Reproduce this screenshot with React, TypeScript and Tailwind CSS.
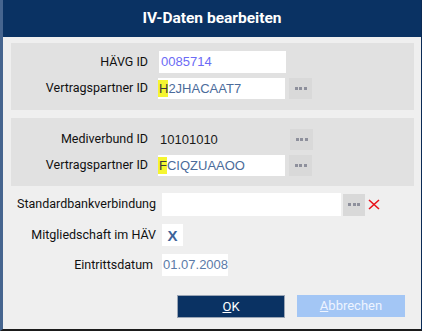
import React from 'react';

const label = "text-[12.5px] text-[#111111] text-right whitespace-nowrap";
const valueFont = "font-['Liberation_Sans',Arial,sans-serif] text-[13px]";

function Dots({ className = 'w-[23px] h-[21px]' }: { className?: string }) {
    return (
        <div className={`${className} bg-[#d9d9d9] flex items-center justify-center gap-[1.5px]`}>
            <span className="w-[3px] h-[3px] bg-[#8e909c]"></span>
            <span className="w-[3px] h-[3px] bg-[#8e909c]"></span>
            <span className="w-[3px] h-[3px] bg-[#8e909c]"></span>
        </div>
    );
}

function IdValue({ first, rest }: { first: string; rest: string }) {
    return (
        <div className={`w-[127px] h-[21px] bg-white flex items-center text-[#4b6b9a] ${valueFont}`}>
            <span className="bg-[#f5f530] text-[#3a3a3a] leading-[17px] pl-[1px]">{first}</span>
            <span>{rest}</span>
        </div>
    );
}

export default function App() {
    return (
        <div className="w-[422px] h-[331px] bg-[#efefef] border-l-[3px] border-l-[#46658f] border-r border-r-[#0a2a55] border-b-2 border-b-[#1b1b1b] flex flex-col font-['Roboto','Liberation_Sans',sans-serif] overflow-hidden">
            {/* Header */}
            <div className="h-[37px] bg-[#0a3263] flex items-center justify-center shrink-0">
                <h1 className="text-white font-bold text-[15.5px]">IV-Daten bearbeiten</h1>
            </div>

            <div className="pl-[8px] pr-[7px] pt-[6px]">
                {/* Panel 1 */}
                <div className="bg-[#e1e1e1] h-[67px] pt-[8px] flex flex-col gap-[5px]">
                    <div className="flex items-center h-[22px]">
                        <span className={`${label} w-[137px]`}>HÄVG ID</span>
                        <div className={`ml-[11px] w-[127px] h-[22px] bg-white flex items-center pl-[2px] text-[#6b6bf5] ${valueFont}`}>0085714</div>
                    </div>
                    <div className="flex items-center h-[21px]">
                        <span className={`${label} w-[137px]`}>Vertragspartner ID</span>
                        <div className="ml-[10px]"><IdValue first="H" rest="2JHACAAT7" /></div>
                        <div className="ml-[4px]"><Dots /></div>
                    </div>
                </div>

                {/* Panel 2 */}
                <div className="bg-[#e1e1e1] h-[68px] mt-[8px] pt-[11px] flex flex-col gap-[5px]">
                    <div className="flex items-center h-[21px]">
                        <span className={`${label} w-[137px]`}>Mediverbund ID</span>
                        <div className={`ml-[12px] w-[126px] text-[#1a1a1a] ${valueFont}`}>10101010</div>
                        <div className="ml-[4px]"><Dots /></div>
                    </div>
                    <div className="flex items-center h-[21px]">
                        <span className={`${label} w-[137px]`}>Vertragspartner ID</span>
                        <div className="ml-[10px]"><IdValue first="F" rest="CIQZUAAOO" /></div>
                        <div className="ml-[4px]"><Dots /></div>
                    </div>
                </div>

                {/* Standalone fields */}
                <div className="mt-[7px] flex flex-col gap-[8px]">
                    <div className="flex items-center h-[23px]">
                        <span className={`${label} w-[145px]`}>Standardbankverbindung</span>
                        <div className="ml-[6px] w-[179px] h-[23px] bg-white"></div>
                        <div className="ml-[2px]"><Dots className="w-[22px] h-[22px]" /></div>
                        <svg className="ml-[3px]" width="12" height="11" viewBox="0 0 12 11">
                            <path d="M1 1 L11 10 M11 1 L1 10" stroke="#e8121b" strokeWidth="1.6" fill="none" />
                        </svg>
                    </div>
                    <div className="flex items-center h-[22px]">
                        <span className={`${label} w-[145px]`}>Mitgliedschaft im HÄV</span>
                        <div className="ml-[6px] w-[21px] h-[22px] bg-white flex items-center justify-center">
                            <span className="text-[15px] font-bold text-[#3d6399] leading-none font-['Liberation_Sans',Arial,sans-serif]">X</span>
                        </div>
                    </div>
                    <div className="flex items-center h-[22px]">
                        <span className={`${label} w-[142px]`}>Eintrittsdatum</span>
                        <div className={`ml-[9px] w-[66px] h-[22px] bg-white flex items-center pl-[1px] text-[#5b7ba8] ${valueFont}`}>01.07.2008</div>
                    </div>
                </div>

                {/* Buttons */}
                <div className="mt-[19px] flex justify-end gap-[12px] pr-[9px]">
                    <button className="w-[108px] h-[23px] bg-[#0a3263] border border-[#9aa5b5] text-white text-[13px] flex items-center justify-center">
                        <span><span className="underline">O</span>K</span>
                    </button>
                    <button className="w-[108px] h-[22px] bg-[#a3c6f5] text-[#eef4ff] text-[13px] flex items-center justify-center">
                        <span><span className="underline">A</span>bbrechen</span>
                    </button>
                </div>
            </div>
        </div>
    );
}
